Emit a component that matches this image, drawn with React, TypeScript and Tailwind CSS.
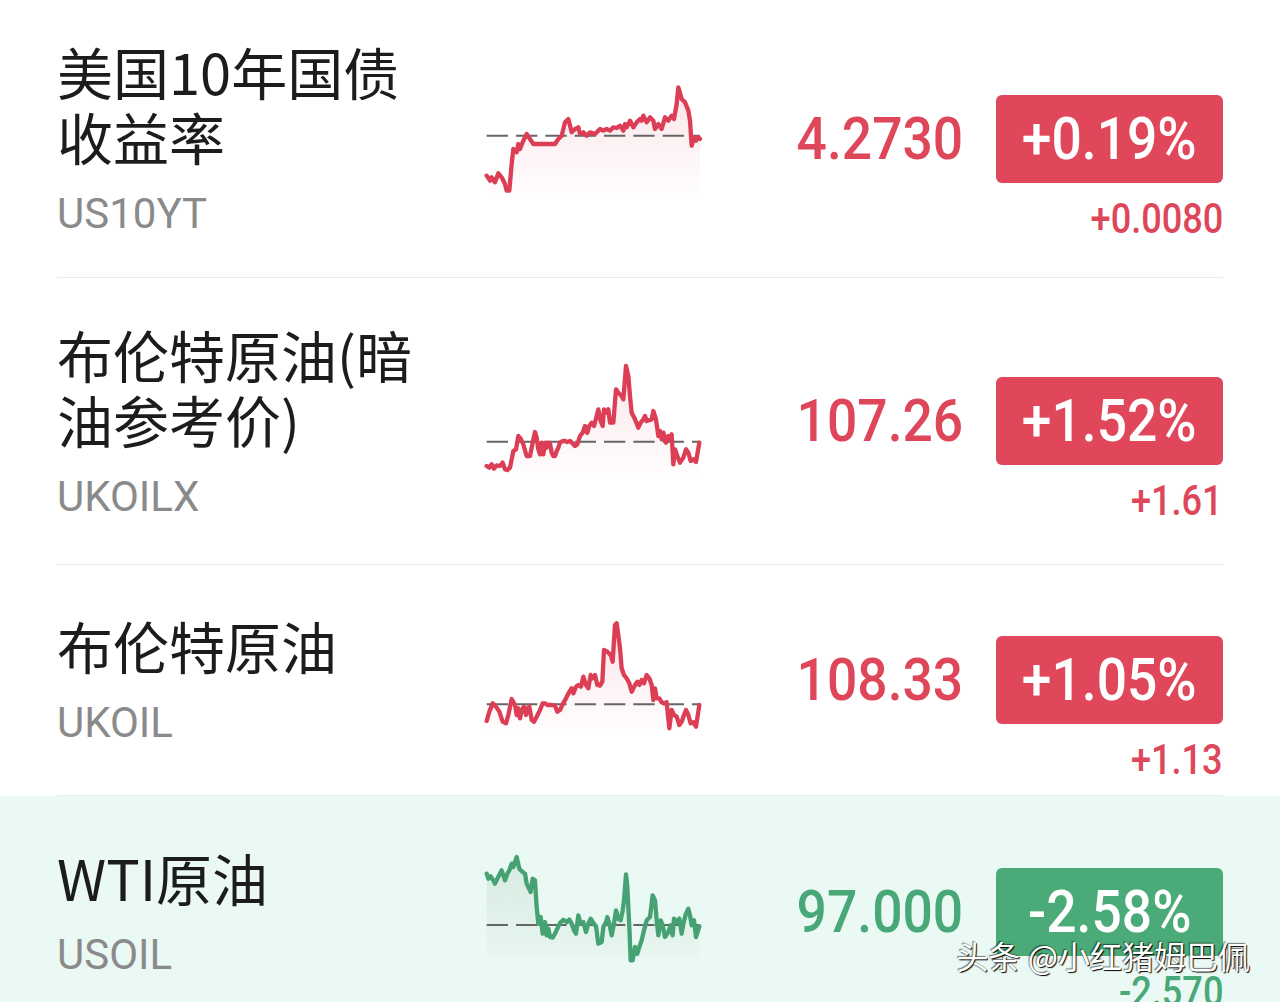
type Pt = [number, number];

type Quote = {
  title: string[];
  code: string;
  price: string;
  pct: string;
  change: string;
  up: boolean;
  base: number;
  bottom: number;
  pts: Pt[];
  height: string;
};

const quotes: Quote[] = [
  {
    title: ["美国10年国债", "收益率"],
    code: "US10YT",
    price: "4.2730",
    pct: "+0.19%",
    change: "+0.0080",
    up: true,
    base: 185,
    bottom: 355,
    height: "h-[278px] border-b border-[#ebebeb]",
    pts: [
      [50, 305], [60, 320], [65, 310], [75, 325], [85, 298], [95, 310], [105, 330], [110, 350], [118, 350],
      [125, 270], [130, 225], [140, 235], [145, 210], [150, 225], [160, 200], [170, 180], [180, 195], [190, 210],
      [255, 210], [265, 195], [275, 185], [285, 145], [295, 135], [305, 175], [315, 165], [325, 160], [330, 180],
      [340, 175], [350, 185], [360, 175], [375, 180], [390, 165], [400, 170], [410, 165], [420, 170], [430, 160],
      [440, 162], [450, 155], [460, 170], [465, 150], [470, 160], [480, 140], [490, 160], [500, 145], [510, 135],
      [515, 140], [520, 125], [530, 145], [540, 130], [550, 140], [555, 165], [565, 150], [575, 165], [585, 130],
      [595, 140], [605, 125], [612, 135], [620, 90], [625, 40], [635, 75], [645, 85], [655, 110], [660, 140],
      [665, 215], [672, 190], [678, 200], [685, 190], [690, 195],
    ],
  },
  {
    title: ["布伦特原油(暗", "油参考价)"],
    code: "UKOILX",
    price: "107.26",
    pct: "+1.52%",
    change: "+1.61",
    up: true,
    base: 257,
    bottom: 350,
    height: "h-[287px] border-b border-[#ebebeb]",
    pts: [
      [50, 330], [58, 335], [65, 325], [72, 338], [80, 328], [90, 330], [98, 320], [105, 340], [112, 342],
      [120, 335], [125, 310], [130, 285], [138, 280], [145, 240], [152, 248], [160, 265], [170, 300], [180, 300],
      [188, 260], [195, 228], [200, 245], [205, 280], [210, 295], [215, 260], [220, 295], [225, 260], [230, 275],
      [235, 260], [240, 262], [245, 290], [250, 300], [255, 300], [260, 285], [265, 275], [270, 260], [278, 255],
      [285, 255], [292, 258], [300, 255], [308, 262], [315, 270], [322, 265], [330, 240], [338, 230], [345, 210],
      [352, 230], [358, 210], [365, 200], [372, 210], [380, 180], [385, 160], [392, 195], [398, 210], [402, 160],
      [410, 170], [415, 160], [420, 200], [430, 200], [438, 100], [445, 110], [455, 120], [460, 130], [468, 30],
      [475, 60], [480, 120], [485, 170], [495, 190], [505, 215], [512, 200], [520, 190], [525, 180], [530, 195],
      [545, 190], [550, 165], [558, 190], [565, 240], [570, 225], [575, 250], [580, 230], [588, 260], [595, 240],
      [600, 250], [605, 235], [610, 325], [615, 280], [622, 300], [630, 320], [640, 305], [648, 280], [655, 290],
      [662, 315], [670, 310], [678, 318], [688, 260],
    ],
  },
  {
    title: ["布伦特原油"],
    code: "UKOIL",
    price: "108.33",
    pct: "+1.05%",
    change: "+1.13",
    up: true,
    base: 268,
    bottom: 345,
    height: "h-[231px] border-b border-[#ebebeb]",
    pts: [
      [50, 318], [58, 290], [68, 265], [78, 275], [88, 290], [98, 320], [108, 325], [115, 300], [125, 252],
      [135, 270], [140, 300], [145, 280], [150, 310], [155, 285], [162, 275], [168, 300], [172, 280], [178, 275],
      [185, 315], [192, 320], [200, 305], [210, 285], [218, 265], [225, 265], [232, 270], [245, 270], [255, 272],
      [262, 290], [270, 285], [278, 268], [288, 250], [298, 230], [305, 220], [310, 235], [318, 215], [325, 210],
      [333, 215], [340, 185], [348, 210], [355, 220], [362, 180], [368, 190], [375, 180], [382, 210], [390, 212],
      [397, 200], [402, 105], [412, 110], [422, 120], [428, 140], [435, 30], [440, 25], [445, 60], [450, 100],
      [455, 160], [462, 180], [470, 190], [478, 205], [485, 230], [495, 210], [502, 200], [508, 210], [515, 195],
      [522, 205], [530, 180], [538, 190], [545, 210], [550, 255], [555, 220], [560, 250], [568, 250], [575, 262],
      [582, 265], [590, 262], [598, 340], [605, 285], [612, 300], [620, 305], [628, 330], [635, 320], [642, 300],
      [648, 285], [655, 300], [662, 325], [670, 322], [678, 335], [688, 270],
    ],
  },
  {
    title: ["WTI原油"],
    code: "USOIL",
    price: "97.000",
    pct: "-2.58%",
    change: "-2.570",
    up: false,
    base: 234,
    bottom: 330,
    height: "h-[231px] bg-[#eaf9f3]",
    pts: [
      [50, 80], [55, 95], [62, 88], [70, 100], [75, 110], [82, 95], [95, 70], [105, 100], [112, 80], [118, 70],
      [125, 50], [130, 60], [135, 45], [140, 30], [148, 65], [158, 75], [165, 80], [170, 110], [175, 120],
      [182, 135], [188, 95], [195, 100], [200, 180], [205, 230], [212, 210], [218, 260], [225, 225], [230, 265],
      [235, 245], [240, 270], [248, 272], [255, 260], [262, 245], [270, 228], [280, 218], [290, 225], [298, 218],
      [305, 230], [312, 250], [318, 260], [325, 205], [332, 230], [340, 225], [348, 255], [355, 230], [362, 215],
      [370, 228], [378, 238], [385, 290], [395, 285], [400, 240], [408, 225], [412, 210], [418, 230], [425, 265],
      [432, 230], [438, 190], [445, 215], [452, 220], [458, 190], [462, 160], [468, 82], [472, 120], [478, 240],
      [482, 340], [488, 340], [495, 300], [502, 320], [508, 300], [515, 280], [522, 250], [530, 220], [540, 210],
      [548, 145], [555, 160], [560, 220], [565, 265], [572, 220], [578, 235], [585, 270], [595, 255], [602, 235],
      [608, 265], [612, 215], [620, 225], [628, 215], [635, 260], [640, 230], [648, 200], [655, 185], [660, 205],
      [665, 235], [672, 220], [678, 270], [688, 238],
    ],
  },
];

function Spark({ q, id }: { q: Quote; id: string }) {
  const line = q.pts.map((p, i) => (i ? "L" : "M") + p[0] + " " + p[1]).join(" ");
  const first = q.pts[0];
  const last = q.pts[q.pts.length - 1];
  const area = `${line} L${last[0]} ${q.bottom} L${first[0]} ${q.bottom} Z`;
  const stroke = q.up ? "#dc3f55" : "#46a272";
  const top = q.up ? "rgba(224,70,90,0.14)" : "rgba(70,110,90,0.11)";
  const end = q.up ? "rgba(224,70,90,0.01)" : "rgba(70,110,90,0.02)";
  return (
    <svg width={250} height={130} viewBox="0 0 750 390">
      <defs>
        <linearGradient id={id} x1="0" y1="0" x2="0" y2="1">
          <stop offset="0" stopColor={top} />
          <stop offset="1" stopColor={end} />
        </linearGradient>
      </defs>
      <path d={area} fill={`url(#${id})`} />
      <line x1={50} x2={690} y1={q.base} y2={q.base} stroke="#666666" strokeWidth={6} strokeDasharray="64 24" />
      <path d={line} fill="none" stroke={stroke} strokeWidth={13} strokeLinejoin="round" strokeLinecap="round" />
    </svg>
  );
}

export default function App() {
  return (
    <div className="relative w-[1280px] h-[1002px] overflow-hidden bg-white font-['Noto_Sans_CJK_SC',sans-serif]">
      {quotes.map((q, i) => (
        <div key={q.code} className={i === 3 ? q.height + " px-[57px]" : "px-[57px]"}>
          <div className={(i === 3 ? "h-full" : q.height) + " flex items-center"}>
            {/* name + code */}
            <div className="w-[413px] flex flex-col">
              <div className="text-[56px] leading-[65px] text-[#1c1c1c]">
                {q.title.map((t) => (
                  <div key={t}>{t}</div>
                ))}
              </div>
              <div className="mt-[21px] text-[42px] leading-[50px] text-[#8a8a8a] font-['Roboto',sans-serif]">
                {q.code}
              </div>
            </div>

            {/* sparkline */}
            <div className="w-[250px] h-[130px]">
              <Spark q={q} id={"g" + i} />
            </div>

            {/* price */}
            <div className="flex-1 flex justify-end">
              <div
                className={
                  "font-['Roboto',sans-serif] font-medium text-[60px] leading-[70px] scale-x-[0.89] origin-right " +
                  (q.up ? "text-[#de4659]" : "text-[#48a877]")
                }
              >
                {q.price}
              </div>
            </div>

            {/* badge + change */}
            <div className="ml-[33px] w-[227px] flex flex-col items-end">
              <div className="h-[61px]" />
              <div
                className={
                  "w-[227px] h-[88px] rounded-[6px] flex items-center justify-center " +
                  (q.up ? "bg-[#e0475a]" : "bg-[#4aaa78]")
                }
              >
                <span className="font-['Roboto',sans-serif] font-medium text-white text-[60px] leading-[70px] scale-x-[0.89]">
                  {q.pct}
                </span>
              </div>
              <div className="mt-[10px] h-[51px] flex justify-end">
                <span
                  className={
                    "font-['Roboto',sans-serif] font-medium text-[42px] leading-[51px] scale-x-[0.86] origin-right " +
                    (q.up ? "text-[#de4659]" : "text-[#48a877]")
                  }
                >
                  {q.change}
                </span>
              </div>
            </div>
          </div>
        </div>
      ))}

      {/* watermark */}
      <div className="absolute right-[30px] top-[935px] text-[32px] leading-[40px] text-white [text-shadow:1px_1px_1px_#000,-1px_-1px_1px_rgba(0,0,0,0.5)]">
        头条 @小红猪姆巴佩
      </div>
    </div>
  );
}
